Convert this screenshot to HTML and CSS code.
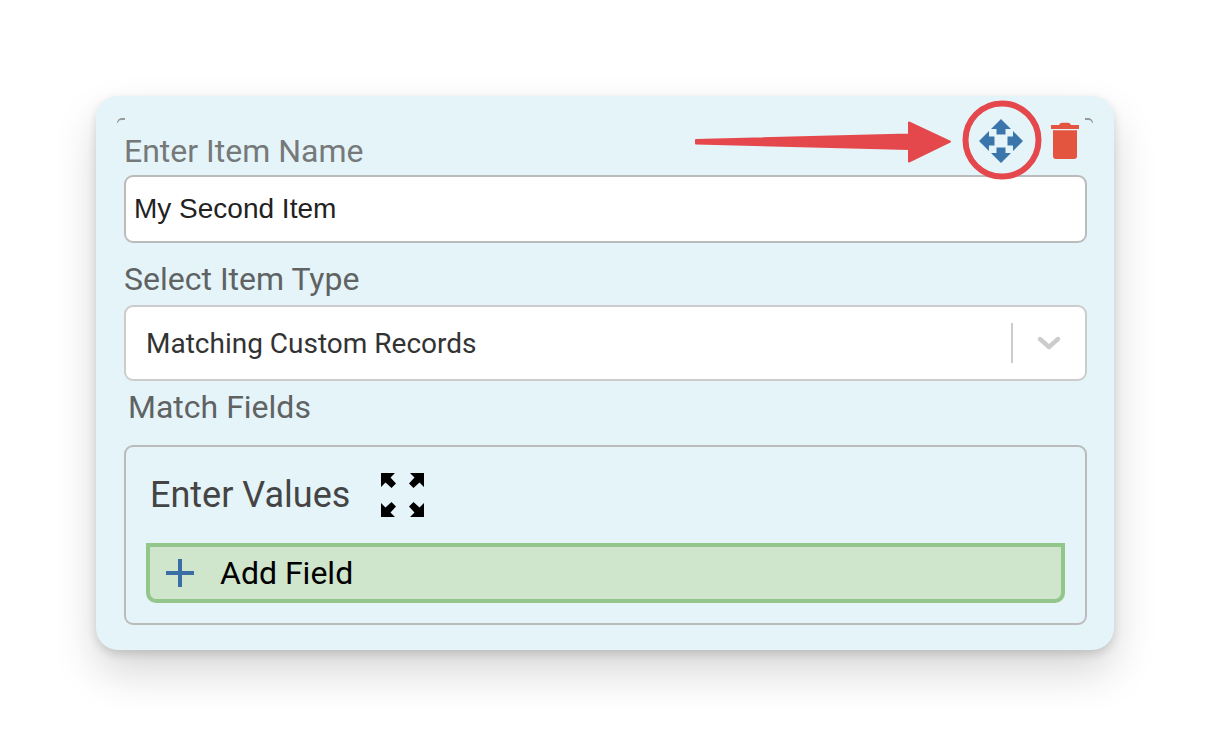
FILE: index.html
```html
<!DOCTYPE html>
<html lang="en">
<head>
<meta charset="utf-8">
<title>Item</title>
<link rel="stylesheet" href="styles.css">
</head>
<body>
<main class="card">
  <span class="tick tick-left"></span>
  <span class="tick tick-right"></span>
  <svg class="arrow" viewBox="0 0 260 44" aria-hidden="true">
    <path d="M2 20 L215 14.5 L215 2.5 L256 21.7 L215 41.5 L215 29 L2 23.6 Z" fill="#e5484c" stroke="#e5484c" stroke-width="2" stroke-linejoin="round"/>
  </svg>
  <svg class="ring" viewBox="0 0 80 80" aria-hidden="true">
    <circle cx="40" cy="40" r="36.5" fill="none" stroke="#e5484c" stroke-width="6"/>
  </svg>
  <svg class="move" viewBox="0 0 44 44" aria-hidden="true">
    <path fill="#3a76ac" d="M22 0 L32 10 H26.5 V15.5 H17.5 V10 H12 Z M22 44 L12 34 H17.5 V28.5 H26.5 V34 H32 Z M0 22 L10 12 V17.5 H15.5 V26.5 H10 V32 Z M44 22 L34 32 V26.5 H28.5 V17.5 H34 V12 Z"/>
  </svg>
  <svg class="trash" viewBox="0 0 28 38" aria-hidden="true">
    <path fill="#e4553f" d="M0 3 H8 Q9 0.7 11 0.7 H17 Q19 0.7 20 3 H28 V7 H0 Z M2 8.3 H26 V34 Q26 37 23 37 H5 Q2 37 2 34 Z"/>
  </svg>

  <label class="label label-name" for="name">Enter Item Name</label>
  <input class="text-input" id="name" type="text" value="My Second Item">

  <div class="label label-type">Select Item Type</div>
  <div class="select">
    <span class="select-value">Matching Custom Records</span>
    <span class="select-sep"></span>
    <svg class="chevron" viewBox="0 0 24 14" aria-hidden="true">
      <path d="M3 3 L12 11 L21 3" fill="none" stroke="#cccccc" stroke-width="4.4" stroke-linecap="round" stroke-linejoin="round"/>
    </svg>
  </div>

  <div class="label label-match">Match Fields</div>
  <section class="values">
    <div class="values-head">
      <h2 class="values-title">Enter Values</h2>
      <svg class="expand" viewBox="0 0 43 44" aria-hidden="true">
        <path fill="#000" d="M0 0 H14 L9.5 4.5 L15 10.5 L10.5 15 L4.5 9.5 L0 14 Z M43 0 V14 L38.5 9.5 L32.5 15 L28 10.5 L33.5 4.5 L29 0 Z M0 44 V30 L4.5 34.5 L10.5 29 L15 33.5 L9.5 39.5 L14 44 Z M43 44 H29 L33.5 39.5 L28 33.5 L32.5 29 L38.5 34.5 L43 30 Z"/>
      </svg>
    </div>
    <button class="add-field" type="button">
      <svg class="plus" viewBox="0 0 28 28" aria-hidden="true">
        <path fill="#3a6fa5" d="M12 0 H16 V12 H28 V16 H16 V28 H12 V16 H0 V12 H12 Z"/>
      </svg>
      <span>Add Field</span>
    </button>
  </section>
</main>
</body>
</html>
```

FILE: styles.css
```css
* { box-sizing: border-box; }

html, body { margin: 0; height: 100%; }

body {
  background: #ffffff;
  padding: 96px;
  overflow: hidden;
  font-family: Roboto, "Liberation Sans", sans-serif;
}

.card {
  position: relative;
  width: 1018px;
  height: 554px;
  padding: 37px 27px 0 28px;
  background: #e5f4f9;
  border-radius: 22px;
  box-shadow: 0 22px 44px rgba(0, 0, 0, 0.16), 0 4px 10px rgba(0, 0, 0, 0.14);
}

.tick {
  position: absolute;
  top: 22px;
  width: 8px;
  height: 5px;
  border-top: 2px solid #999999;
}
.tick-left { left: 21px; border-left: 1px solid #999999; border-top-left-radius: 7px; }
.tick-right { right: 21px; border-right: 1px solid #999999; border-top-right-radius: 7px; }

.arrow { position: absolute; left: 598px; top: 24px; width: 260px; height: 44px; }
.ring { position: absolute; left: 866px; top: 4px; width: 80px; height: 80px; }
.move { position: absolute; left: 883px; top: 23px; width: 44px; height: 44px; }
.trash { position: absolute; left: 955px; top: 26px; width: 28px; height: 38px; }

.label {
  display: block;
  font-size: 32px;
  line-height: 36px;
  color: #5f6363;
}
.label-name { color: #767979; }
.label-type { margin-top: 18px; }
.label-match { margin: 8px 0 0 4px; }

.text-input {
  display: block;
  width: 963px;
  height: 68px;
  margin-top: 6px;
  padding: 0 8px;
  border: 2px solid #bbbbbb;
  border-radius: 9px;
  background: #ffffff;
  font-family: "Liberation Sans", Arial, sans-serif;
  font-size: 28px;
  color: #222222;
}

.select {
  display: flex;
  align-items: center;
  width: 963px;
  height: 76px;
  margin-top: 8px;
  padding: 0 24px 0 20px;
  border: 2px solid #cccccc;
  border-radius: 9px;
  background: #ffffff;
  font-size: 28px;
  color: #333333;
}
.select-value { flex: 1; }
.select-sep { width: 2px; height: 40px; background: #cccccc; margin-right: 24px; }
.chevron { width: 24px; height: 14px; }

.values {
  width: 963px;
  height: 180px;
  margin-top: 20px;
  padding: 0 20px;
  border: 2px solid #bbbbbb;
  border-radius: 9px;
}
.values-head {
  display: flex;
  align-items: center;
  gap: 31px;
  height: 96px;
}
.values-title {
  margin: 0 0 0 4px;
  font-size: 36px;
  font-weight: 400;
  color: #444444;
}
.expand { width: 43px; height: 44px; }

.add-field {
  display: flex;
  align-items: center;
  gap: 26px;
  width: 919px;
  height: 60px;
  padding: 0 0 0 16px;
  border: 4px solid #93c68a;
  border-radius: 0 0 10px 10px;
  background: #cfe5cc;
  font-family: inherit;
  font-size: 32px;
  color: #000000;
}
.plus { width: 28px; height: 28px; }
```
